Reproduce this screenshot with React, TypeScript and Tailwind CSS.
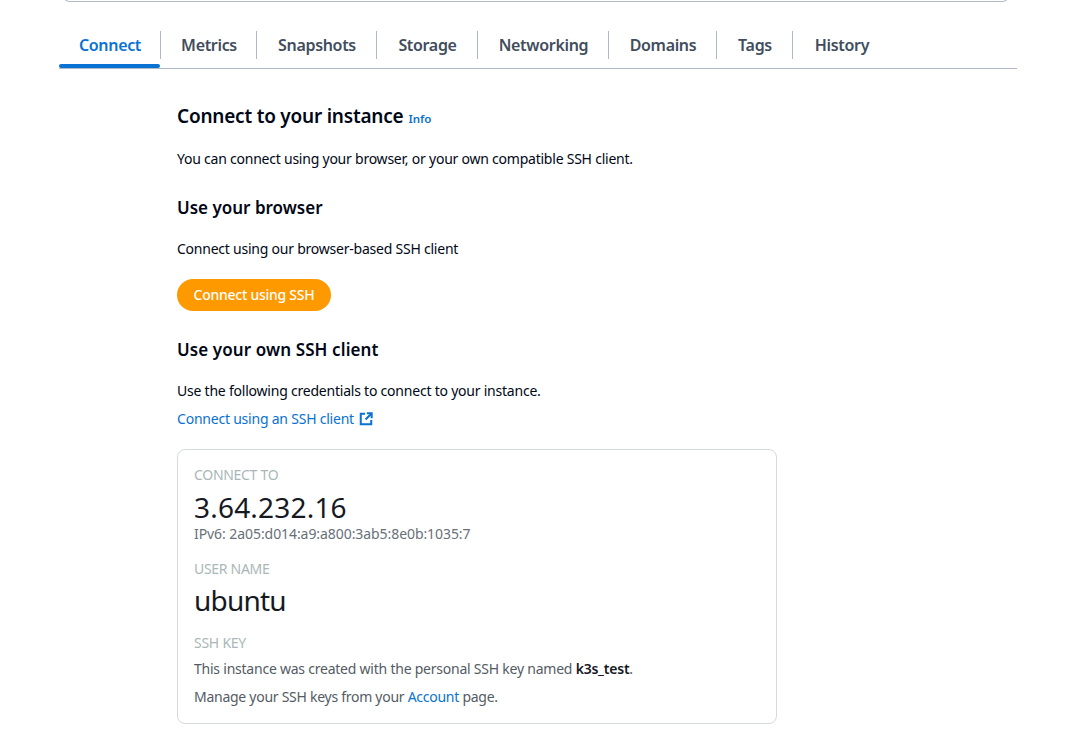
const FONT = "font-['Noto_Sans',sans-serif]";

const TABS = [
  { label: 'Connect', width: 'w-[102px]' },
  { label: 'Metrics', width: 'w-[96px]' },
  { label: 'Snapshots', width: 'w-[120px]' },
  { label: 'Storage', width: 'w-[101px]' },
  { label: 'Networking', width: 'w-[131px]' },
  { label: 'Domains', width: 'w-[108px]' },
  { label: 'Tags', width: 'w-[76px]' },
  { label: 'History', width: 'w-[97px]' },
];

function TabBar() {
  return (
    <div className="ml-[59px] mr-[55px] flex h-[43px] border-b border-[#b0b8c5]">
      {TABS.map((tab, i) => (
        <div key={tab.label} className="relative h-[43px] pt-[5px]">
          <div
            className={`flex h-[28px] items-center justify-center pl-px text-[16px] font-semibold tracking-[-0.33px] ${tab.width} ${
              i === 0 ? 'text-[#0972d3]' : 'text-[#414d5c]'
            } ${i < TABS.length - 1 ? 'border-r border-[#b0b8c5]' : ''}`}
          >
            {tab.label}
          </div>
          {i === 0 && (
            <div className="absolute bottom-px left-0 right-px h-[4px] rounded-[2px] bg-[#0972d3]" />
          )}
        </div>
      ))}
    </div>
  );
}

function ExternalIcon() {
  return (
    <svg width="14" height="14" viewBox="0 0 16 16" fill="none" stroke="#0972d3" strokeWidth="2.3">
      <path d="M7 2H2v12h12V9" />
      <path d="M9 1.5h5.5V7" />
      <path d="M14 2 7.5 8.5" />
    </svg>
  );
}

export default function App() {
  return (
    <div className={`h-[742px] w-[1072px] overflow-hidden bg-white ${FONT}`}>
      {/* Edge of the card above, cut off by the top of the page */}
      <div className="mx-[62px] mt-[-6px] h-[8px] rounded-b-[8px] border border-[#b0b8c5]" />

      <div className="pt-[24px]">
        <TabBar />
      </div>

      <div className="ml-[177px] w-[600px] text-[#000716]">
        <div className="mt-[33px] flex items-baseline gap-[5px]">
          <h2 className="text-[19px] font-semibold leading-[28px] tracking-[-0.22px]">Connect to your instance</h2>
          <a className="text-[11.5px] font-semibold text-[#0972d3]">Info</a>
        </div>
        <p className="mt-[19px] text-[14px] leading-[20px] tracking-[-0.23px]">
          You can connect using your browser, or your own compatible SSH client.
        </p>

        <h3 className="mt-[27px] text-[17px] font-semibold leading-[24px]">Use your browser</h3>
        <p className="mt-[19px] text-[14px] leading-[20px] tracking-[-0.23px]">Connect using our browser-based SSH client</p>

        <button className="mt-[20px] block h-[32px] w-[154px] rounded-full bg-[#ff9900] pb-[2px] text-[14px] font-medium tracking-[-0.25px] text-white">
          Connect using SSH
        </button>

        <h3 className="mt-[27px] text-[17px] font-semibold leading-[24px] tracking-[0.1px]">Use your own SSH client</h3>
        <p className="mt-[19px] text-[14px] leading-[20px] tracking-[-0.22px]">Use the following credentials to connect to your instance.</p>
        <a className="mt-[8px] flex items-center gap-[5px] text-[14px] leading-[20px] tracking-[-0.22px] text-[#0972d3]">
          Connect using an SSH client
          <ExternalIcon />
        </a>

        <div className="mt-[20px] h-[275px] rounded-[8px] border border-[#d5dbdb] px-[16px] pt-[15px]">
          <div className="text-[14px] leading-[20px] tracking-[-0.3px] text-[#aab7b8]">CONNECT TO</div>
          <div className="mt-[4px] text-[28px] leading-[36px] tracking-[0.2px] text-[#16191f]">3.64.232.16</div>
          <div className="mt-[1px] text-[14px] leading-[16px] tracking-[-0.07px] text-[#687078]">IPv6: 2a05:d014:a9:a800:3ab5:8e0b:1035:7</div>
          <div className="mt-[17px] text-[14px] leading-[20px] tracking-[-0.3px] text-[#aab7b8]">USER NAME</div>
          <div className="mt-[3px] text-[28px] leading-[36px] tracking-[-0.8px] text-[#16191f]">ubuntu</div>
          <div className="mt-[15px] text-[14px] leading-[20px] tracking-[-0.25px] text-[#aab7b8]">SSH KEY</div>
          <p className="mt-[6px] text-[14px] leading-[20px] tracking-[-0.23px] text-[#545b64]">
            This instance was created with the personal SSH key named <b className="font-semibold text-[#16191f]">k3s_test</b>.
          </p>
          <p className="mt-[8px] text-[14px] leading-[20px] tracking-[-0.27px] text-[#545b64]">
            Manage your SSH keys from your <a className="text-[#0972d3]">Account</a> page.
          </p>
        </div>
      </div>
    </div>
  );
}
